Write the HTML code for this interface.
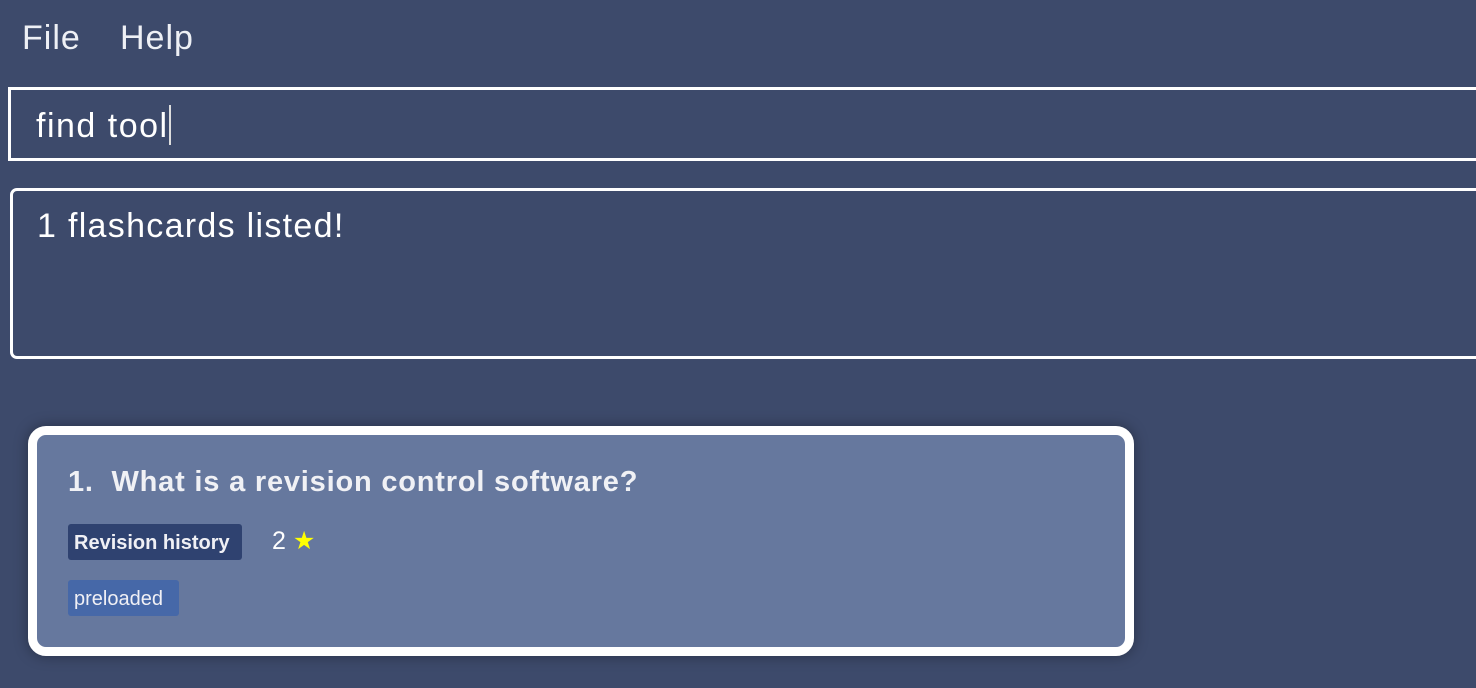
<!DOCTYPE html>
<html><head><style>
body{margin:0;width:1476px;height:688px;background:#3d4a6b;font-family:"Liberation Sans",sans-serif;overflow:hidden;position:relative;color:#fff}
.abs{position:absolute;white-space:nowrap}
.menu{top:19px;font-size:34px;color:#eef0f5;letter-spacing:1px}
.cmd{left:8px;top:87px;width:1480px;height:68px;border:3px solid #fff;box-sizing:content-box}
.cmdt{left:36px;top:105px;font-size:34px;letter-spacing:1.5px}
.res{left:10px;top:188px;width:1480px;height:165px;border:3px solid #fff;border-radius:7px}
.rest{left:37px;top:207px;font-size:34px;letter-spacing:1.3px}
.card{left:28px;top:426px;width:1088px;height:212px;border:9px solid #fff;border-radius:18px;background:#66789e;box-shadow:0 0 14px rgba(0,0,0,.35)}
.title{left:68px;top:466px;font-size:29px;font-weight:bold;color:#f0f1f5;letter-spacing:0.8px}
.tag{font-size:20px;border-radius:3px;padding:0 6px;height:36px;line-height:38px;color:#f0f0f5}
</style></head><body>
<div class="abs menu" style="left:22px">File</div>
<div class="abs menu" style="left:120px">Help</div>
<div class="abs cmd"></div>
<div class="abs cmdt">find tool<span style="display:inline-block;width:2px;height:40px;background:#ddd;vertical-align:-8px"></span></div>
<div class="abs res"></div>
<div class="abs rest">1 flashcards listed!</div>
<div class="abs card"></div>
<div class="abs title">1.&nbsp; What is a revision control software?</div>
<div class="abs tag" style="left:68px;top:524px;width:162px;background:#2f4270;font-weight:bold">Revision history</div>
<div class="abs" style="left:272px;top:526px;font-size:25px">2 <span style="color:#ffff00">★</span></div>
<div class="abs tag" style="left:68px;top:580px;width:99px;background:#4668a8">preloaded</div>
</body></html>
